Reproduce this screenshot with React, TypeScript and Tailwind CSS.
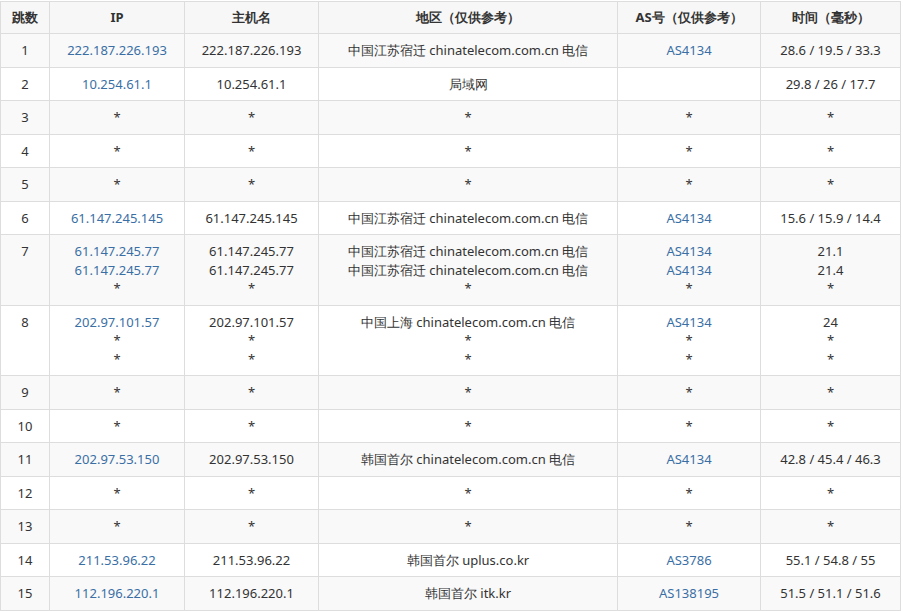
const rows: [string, string[], string[], string[], string[], string[]][] = [
  ['1', ['222.187.226.193'], ['222.187.226.193'], ['中国江苏宿迁 chinatelecom.com.cn 电信'], ['AS4134'], ['28.6 / 19.5 / 33.3']],
  ['2', ['10.254.61.1'], ['10.254.61.1'], ['局域网'], [''], ['29.8 / 26 / 17.7']],
  ['3', ['*'], ['*'], ['*'], ['*'], ['*']],
  ['4', ['*'], ['*'], ['*'], ['*'], ['*']],
  ['5', ['*'], ['*'], ['*'], ['*'], ['*']],
  ['6', ['61.147.245.145'], ['61.147.245.145'], ['中国江苏宿迁 chinatelecom.com.cn 电信'], ['AS4134'], ['15.6 / 15.9 / 14.4']],
  ['7', ['61.147.245.77', '61.147.245.77', '*'], ['61.147.245.77', '61.147.245.77', '*'], ['中国江苏宿迁 chinatelecom.com.cn 电信', '中国江苏宿迁 chinatelecom.com.cn 电信', '*'], ['AS4134', 'AS4134', '*'], ['21.1', '21.4', '*']],
  ['8', ['202.97.101.57', '*', '*'], ['202.97.101.57', '*', '*'], ['中国上海 chinatelecom.com.cn 电信', '*', '*'], ['AS4134', '*', '*'], ['24', '*', '*']],
  ['9', ['*'], ['*'], ['*'], ['*'], ['*']],
  ['10', ['*'], ['*'], ['*'], ['*'], ['*']],
  ['11', ['202.97.53.150'], ['202.97.53.150'], ['韩国首尔 chinatelecom.com.cn 电信'], ['AS4134'], ['42.8 / 45.4 / 46.3']],
  ['12', ['*'], ['*'], ['*'], ['*'], ['*']],
  ['13', ['*'], ['*'], ['*'], ['*'], ['*']],
  ['14', ['211.53.96.22'], ['211.53.96.22'], ['韩国首尔 uplus.co.kr'], ['AS3786'], ['55.1 / 54.8 / 55']],
  ['15', ['112.196.220.1'], ['112.196.220.1'], ['韩国首尔 itk.kr'], ['AS138195'], ['51.5 / 51.1 / 51.6']],
];

const widths = ['w-[49px]', 'w-[135px]', 'w-[134px]', 'w-[299px]', 'w-[143px]', 'w-[140px]'];
const heads = ['跳数', 'IP', '主机名', '地区（仅供参考）', 'AS号（仅供参考）', '时间（毫秒）'];

function Lines({ items, link }: { items: string[]; link?: boolean }) {
  return (
    <>
      {items.map((t, i) => (
        <div key={i} className={link && t !== '*' ? 'text-[#3a6fa5]' : ''}>
          {t || '\u00a0'}
        </div>
      ))}
    </>
  );
}

export default function App() {
  return (
    <div className="bg-white w-[903px] h-[611px] pt-px font-['Microsoft_YaHei','Noto_Sans_CJK_SC',sans-serif] text-[13px] text-[#333]">
      <table className="w-[900px] border-collapse table-fixed">
        <thead>
          <tr className="bg-[#f7f7f7]">
            {heads.map((h, i) => (
              <th key={h} className={`${widths[i]} border border-[#ddd] h-[32px] font-bold text-center align-middle`}>
                {h}
              </th>
            ))}
          </tr>
        </thead>
        <tbody>
          {rows.map((r, idx) => (
            <tr key={r[0]} className={idx % 2 === 0 ? 'bg-[#f9f9f9]' : 'bg-white'}>
              <td className="border border-[#ddd] py-[7px] leading-[18.5px] text-center align-top">{r[0]}</td>
              <td className="border border-[#ddd] py-[7px] leading-[18.5px] text-center align-top"><Lines items={r[1]} link /></td>
              <td className="border border-[#ddd] py-[7px] leading-[18.5px] text-center align-top"><Lines items={r[2]} /></td>
              <td className="border border-[#ddd] py-[7px] leading-[18.5px] text-center align-top"><Lines items={r[3]} /></td>
              <td className="border border-[#ddd] py-[7px] leading-[18.5px] text-center align-top"><Lines items={r[4]} link /></td>
              <td className="border border-[#ddd] py-[7px] leading-[18.5px] text-center align-top"><Lines items={r[5]} /></td>
            </tr>
          ))}
        </tbody>
      </table>
    </div>
  );
}
